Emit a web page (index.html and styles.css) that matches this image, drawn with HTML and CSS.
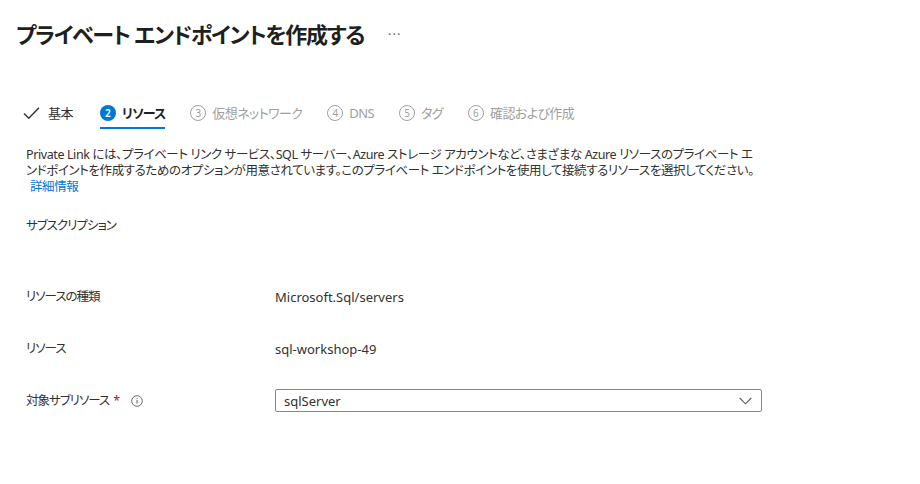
FILE: index.html
```html
<!DOCTYPE html>
<html lang="ja">
<head>
<meta charset="utf-8">
<title>プライベート エンドポイントを作成する</title>
<link rel="stylesheet" href="styles.css">
</head>
<body>
<header class="header">
  <h1 class="title">プライベート エンドポイントを作成する</h1>
  <span class="more">···</span>
</header>
<main class="main">
  <nav class="tabs">
    <div class="tab done">
      <svg class="check" width="17" height="14" viewBox="0 0 17 14"><path d="M1 7.5 L5.8 12.3 L16 1.8" fill="none" stroke="#323130" stroke-width="1.4"/></svg>
      <span>基本</span>
    </div>
    <div class="tab active">
      <span class="num">2</span>
      <span>リソース</span>
    </div>
    <div class="tab off"><span class="num">3</span><span>仮想ネットワーク</span></div>
    <div class="tab off"><span class="num">4</span><span>DNS</span></div>
    <div class="tab off"><span class="num">5</span><span>タグ</span></div>
    <div class="tab off"><span class="num">6</span><span>確認および作成</span></div>
  </nav>
  <p class="desc">Private Link には、プライベート リンク サービス、SQL サーバー、Azure ストレージ アカウントなど、さまざまな Azure リソースのプライベート エンドポイントを作成するためのオプションが用意されています。このプライベート エンドポイントを使用して接続するリソースを選択してください。<br><a class="link" href="#">詳細情報</a></p>
  <div class="form">
    <div class="row tall"><div class="label">サブスクリプション</div><div class="value"></div></div>
    <div class="row"><div class="label">リソースの種類</div><div class="value">Microsoft.Sql/servers</div></div>
    <div class="row"><div class="label">リソース</div><div class="value">sql-workshop-49</div></div>
    <div class="row">
      <div class="label">対象サブリソース<span class="req">*</span>
        <svg class="info" width="12" height="12" viewBox="0 0 12 12"><circle cx="6" cy="6" r="5.3" fill="none" stroke="#605e5c" stroke-width="0.9"/><rect x="5.5" y="5" width="1" height="3.6" fill="#605e5c"/><rect x="5.5" y="3.2" width="1" height="1" fill="#605e5c"/></svg>
      </div>
      <div class="value">
        <div class="select">
          <span>sqlServer</span>
          <svg class="chev" width="13" height="8" viewBox="0 0 13 8"><path d="M0.7 1 L6.5 6.8 L12.3 1" fill="none" stroke="#605e5c" stroke-width="1.1"/></svg>
        </div>
      </div>
    </div>
  </div>
</main>
</body>
</html>
```
FILE: styles.css
```css
html, body {
  margin: 0;
  padding: 0;
  background: #fff;
}
body {
  font-family: "Noto Sans", "Noto Sans CJK JP", sans-serif;
  font-feature-settings: "palt";
  color: #323130;
  font-size: 13px;
}
.header {
  display: flex;
  align-items: center;
  padding: 20px 0 0 16px;
  height: 28px;
}
.title {
  margin: 0;
  font-size: 22px;
  font-weight: 600;
  line-height: 28px;
  color: #201f1e;
  letter-spacing: -1.3px;
}
.more {
  margin-left: 24px;
  color: #605e5c;
  font-size: 13px;
  line-height: 28px;
  letter-spacing: 1px;
}
.main {
  padding: 0 0 0 26px;
}
.tabs {
  display: flex;
  gap: 25px;
  margin-top: 52px;
  margin-left: -3px;
}
.tab {
  display: flex;
  align-items: center;
  gap: 6px;
  padding: 3px 0 4px;
  line-height: 20px;
  font-size: 13px;
  letter-spacing: -0.6px;
  border-bottom: 2px solid transparent;
}
.tab.done {
  gap: 8px;
  margin-right: 2px;
}
.tab.active {
  border-bottom-color: #0078d4;
  font-weight: 600;
  color: #201f1e;
  letter-spacing: -0.9px;
}
.tab.off {
  color: #a19f9d;
}
.num {
  width: 16px;
  height: 16px;
  border-radius: 50%;
  box-sizing: border-box;
  display: flex;
  align-items: center;
  justify-content: center;
  font-size: 10px;
  line-height: 1;
  font-weight: 600;
  letter-spacing: 0;
}
.active .num {
  background: #0078d4;
  color: #fff;
}
.off .num {
  border: 1px solid #a19f9d;
  font-weight: 400;
}
.desc {
  margin: 18px 0 0;
  max-width: 736px;
  line-height: 16px;
  font-size: 12.5px;
  letter-spacing: -0.4px;
}
.link {
  color: #0078d4;
  text-decoration: none;
  margin-left: 4px;
}
.form {
  margin-top: 21px;
}
.row {
  display: grid;
  grid-template-columns: 249px 487px;
  align-items: start;
  height: 52px;
}
.row.tall {
  height: 71px;
}
.label, .value {
  line-height: 20px;
  font-size: 13px;
}
.label {
  display: flex;
  align-items: center;
  font-size: 12.5px;
  letter-spacing: -1px;
}
.req {
  color: #a4262c;
  margin-left: 4px;
}
.info {
  margin-left: 12px;
}
.select {
  display: flex;
  align-items: center;
  justify-content: space-between;
  box-sizing: border-box;
  height: 23px;
  margin-top: -2px;
  border: 1px solid #8a8886;
  border-radius: 2px;
  padding: 0 9px 0 8px;
}
```
